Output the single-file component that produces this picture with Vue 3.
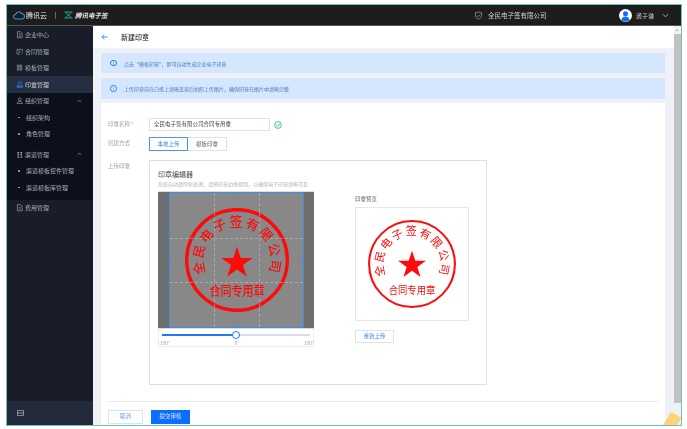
<script setup>
const topItems = [
  { label: '企业中心', icon: 'M2 1h5l2 2v7H2zM4 4h3M4 6h3M4 8h3' },
  { label: '合同管理', icon: 'M1.5 2h8v3M1.5 2v7h4M3.5 4.5h3M3.5 6.5h2M7 9l2.5-2.5' },
  { label: '模板管理', icon: 'M2 1.5h2.5v3H2zM6 1.5h2.5v2H6zM2 6h2.5v3H2zM6 5h2.5v4H6z' }
]
const handles = ['tl', 'tm', 'tr', 'ml', 'mr', 'bl', 'bm', 'br']
</script>

<template>
  <div class="frame">
    <header class="topbar">
      <div class="brand">
        <svg class="cloud" viewBox="0 0 14 10" width="12" height="9"><path d="M3.4 9a2.6 2.6 0 0 1-.3-5.2A3.9 3.9 0 0 1 10.3 3 3 3 0 0 1 10.5 9z" fill="none" stroke="#2f9cf0" stroke-width="1.2"/></svg>
        <span class="brand-cloud">腾讯云</span>
        <i class="brand-sep"></i>
        <svg viewBox="0 0 10 8" width="9" height="8"><path d="M.5.7h9M.5 7.3h9M2 .7c0 2 6 4.6 6 6.600M8 .7c0 2-6 4.6-6 6.600" fill="none" stroke="#14b8a6" stroke-width="1"/></svg>
        <span class="brand-sign">腾讯电子签</span>
      </div>
      <div class="account">
        <svg viewBox="0 0 10 10" width="9" height="9"><path d="M5 1l3.500 1v3c0 2-1.500 3.200-3.500 4C3 8.200 1.500 7 1.500 5V2zM3.500 5l1.200 1.200 2-2.200" fill="none" stroke="#a5a5a5" stroke-width=".8"/></svg>
        <span class="company">全民电子签有限公司</span>
      </div>
      <div class="user">
        <svg viewBox="0 0 13 13" width="13" height="13"><circle cx="6.500" cy="6.500" r="6.500" fill="#fff"/><circle cx="6.500" cy="4.800" r="2.500" fill="#0c6dff"/><path d="M2.300 11c.6-2.500 2.300-3.500 4.200-3.500s3.600 1 4.200 3.500a6.500 6.500 0 0 1-8.400 0z" fill="#0c6dff"/></svg>
        <span class="user-name">龚子谦</span>
        <svg viewBox="0 0 8 5" width="7" height="5"><path d="M1 1l3 3 3-3" fill="none" stroke="#c9c9c9" stroke-width=".9"/></svg>
      </div>
    </header>

    <div class="body">
      <aside class="sidebar">
        <nav class="nav-top">
          <a v-for="item in topItems" :key="item.label" class="row">
            <svg class="ico" viewBox="0 0 11 11"><path :d="item.icon" fill="none" stroke="currentColor" stroke-width=".9"/></svg>{{ item.label }}
          </a>
          <a class="row active">
            <svg class="ico" viewBox="0 0 11 11"><path d="M5.500 1a2.300 2.300 0 0 1 1.300 4.200L7 7h2.500v1.500h-8V7H4l.2-1.800A2.300 2.300 0 0 1 5.500 1zM1.500 10h8" fill="none" stroke="#2f8cff" stroke-width="1"/></svg>印章管理
          </a>
        </nav>
        <nav class="nav-sub">
          <a class="row">
            <svg class="ico" viewBox="0 0 11 11"><circle cx="5.500" cy="3.500" r="2.200" fill="none" stroke="currentColor" stroke-width=".9"/><path d="M1.500 9.500c.4-2.500 2-3.300 4-3.300s3.600.8 4 3.300z" fill="none" stroke="currentColor" stroke-width=".9"/></svg>组织管理
            <svg class="caret" viewBox="0 0 6 4"><path d="M1 3l2-2 2 2" fill="none" stroke="currentColor" stroke-width=".8"/></svg>
          </a>
          <a class="row sub"><i class="dot"></i>组织架构</a>
          <a class="row sub"><i class="dot"></i>角色管理</a>
          <a class="row gap">
            <svg class="ico" viewBox="0 0 11 11"><path d="M2 1.500h2.500v2H2zM6.500 1.500H9v2H6.500zM2 4.700h2.500v2H2zM6.500 4.700H9v2H6.500zM2 8h2.500v2H2zM6.500 8H9v2H6.500z" fill="currentColor"/></svg>渠道管理
            <svg class="caret" viewBox="0 0 6 4"><path d="M1 3l2-2 2 2" fill="none" stroke="currentColor" stroke-width=".8"/></svg>
          </a>
          <a class="row sub"><i class="dot"></i>渠道模板控件管理</a>
          <a class="row sub"><i class="dot"></i>渠道模板库管理</a>
        </nav>
        <nav class="nav-rest">
          <a class="row">
            <svg class="ico" viewBox="0 0 11 11"><path d="M2 1h5l2 2v7H2zM4 5h3M4 7.500h3" fill="none" stroke="currentColor" stroke-width=".9"/></svg>费用管理
          </a>
        </nav>
        <div class="side-foot">
          <svg viewBox="0 0 8 7" width="7" height="6"><path d="M.5 .5h7v6h-7zM.5 3.500h7" fill="none" stroke="#9aa1ad" stroke-width="1"/></svg>
        </div>
      </aside>

      <main class="main">
        <div class="content">
          <div class="title-bar">
            <svg viewBox="0 0 8 7" width="7" height="6"><path d="M3.500 .8L.9 3.500l2.600 2.700M1 3.500h6.500" fill="none" stroke="#1c7cf5" stroke-width="1"/></svg>
            <h1>新建印章</h1>
          </div>
          <div class="page">
            <div class="notice n1"><i class="info">i</i>点击“模板印章”，即可自动生成企业电子印章</div>
            <div class="notice n2"><i class="info">i</i>上传印章前在白纸上清晰盖章后拍照上传图片，确保印章在图片中清晰完整</div>
            <section class="card">
              <div class="field f-name">
                <label class="lbl">印章名称<b>*</b></label>
                <div class="input">全民电子签有限公司合同专用章</div>
                <svg class="ok" viewBox="0 0 10 10" width="8" height="8"><circle cx="5" cy="5" r="4.200" fill="none" stroke="#10b96a" stroke-width="1"/><path d="M3 5l1.600 1.600L7.400 3.500" fill="none" stroke="#10b96a" stroke-width="1"/></svg>
              </div>
              <div class="field f-way">
                <label class="lbl">创建方式</label>
                <div class="seg">
                  <span class="seg-on">本地上传</span>
                  <span class="seg-off">模板印章</span>
                </div>
              </div>
              <div class="field f-upload">
                <label class="lbl">上传印章</label>
                <div class="upload">
                  <div class="editor">
                    <h2>印章编辑器</h2>
                    <p>系统自动透明化处理，请将印章边缘裁切，以确保电子印章清晰可见</p>
                    <div class="canvas">
                      <div class="crop">
                        <svg width="120" height="120" viewBox="-60 -60 120 120" class="stamp">
                          <circle r="50.300" fill="none" stroke="#ff0a0a" stroke-width="3.400"/>
                          <path id="arc-edit" d="M-27.900 19.500A34 34 0 1 1 27.900 19.500" fill="none"/>
                          <text class="seal-txt" font-weight="500" font-size="13" letter-spacing="1.900" text-anchor="middle"><textPath href="#arc-edit" startOffset="50%">全民电子签有限公司</textPath></text>
                          <polygon points="0,-13.500 3.700,-2.100 15.700,-2.100 6,5 9.700,16.400 0,9.400 -9.700,16.400 -6,5 -15.700,-2.100 -3.700,-2.100" fill="#ff0a0a"/>
                          <text class="seal-txt" font-weight="500" font-size="11" text-anchor="middle" transform="translate(0 35) scale(1 1.150)">合同专用章</text>
                        </svg>
                        <i class="gl v1"></i><i class="gl v2"></i><i class="gl h1"></i><i class="gl h2"></i>
                        <i v-for="h in handles" :key="h" class="hd" :class="h"></i>
                      </div>
                    </div>
                    <div class="slider">
                      <div class="track"><i class="fill"></i><i class="knob"></i></div>
                      <div class="ticks"><span>-180°</span><span>0°</span><span>180°</span></div>
                    </div>
                  </div>
                  <div class="preview">
                    <h3>印章预览</h3>
                    <div class="pv-box">
                      <svg width="102" height="102" viewBox="-60 -60 120 120" class="stamp">
                        <circle r="50.500" fill="none" stroke="#ff0a0a" stroke-width="2.400"/>
                        <path id="arc-view" d="M-27.900 19.500A34 34 0 1 1 27.900 19.500" fill="none"/>
                        <text class="seal-txt" font-weight="400" font-size="13" letter-spacing="1.900" text-anchor="middle"><textPath href="#arc-view" startOffset="50%">全民电子签有限公司</textPath></text>
                        <polygon points="0,-15.500 3.900,-3.900 16.300,-3.900 6.300,3.500 10.100,15.300 0,8 -10.100,15.300 -6.300,3.500 -16.300,-3.900 -3.900,-3.900" fill="#ff0a0a"/>
                        <text class="seal-txt" font-weight="400" font-size="11" text-anchor="middle" transform="translate(0 35) scale(1 1.150)">合同专用章</text>
                      </svg>
                    </div>
                    <button class="btn reup">重新上传</button>
                  </div>
                </div>
              </div>
              <div class="footer">
                <button class="btn cancel">取消</button>
                <button class="btn submit">提交审核</button>
              </div>
            </section>
          </div>
        </div>
        <div class="scrollbar"><i class="sb-arrow"></i><i class="sb-thumb"></i></div>
      </main>
    </div>
    <i class="sticker"></i>
  </div>
</template>

<style>
html, body { margin: 0; background: #fff; overflow: hidden; }
</style>

<style scoped>
* { box-sizing: border-box; }
.frame {
  position: relative;
  width: 676px;
  height: 422px;
  margin: 4px 0 0 6px;
  border: 1px solid #6cc4b8;
  display: flex;
  flex-direction: column;
  overflow: hidden;
  font-family: "Noto Sans CJK SC", "Noto Sans", sans-serif;
  font-size: 5px;
  filter: blur(.4px);
}
.topbar {
  flex: 0 0 21px;
  height: 21px;
  background: #1d1d1d;
  display: flex;
  align-items: center;
  border-bottom: 1px solid #555;
  color: #ddd;
}
.brand { display: flex; align-items: center; padding-left: 6px; flex: 0 0 467px; }
.brand-cloud { font-size: 7px; margin-left: 1px; color: #e8e8e8; }
.brand-sep { width: 1px; height: 7px; background: #666; margin: 0 8px; }
.brand-sign { font-size: 6.500px; font-style: italic; font-weight: 700; margin-left: 2px; color: #e8e8e8; }
.account { display: flex; align-items: center; gap: 5px; flex: 0 0 145px; }
.company { font-size: 6.500px; color: #cfcfcf; }
.user { display: flex; align-items: center; }
.user-name { font-size: 6px; margin: 0 8px 0 4px; color: #ccc; }

.body { flex: 1; display: flex; min-height: 0; }
.sidebar {
  flex: 0 0 86px;
  display: flex;
  flex-direction: column;
  background: #181d29;
  color: #a5abb6;
  font-size: 6px;
}
.row { display: flex; align-items: center; height: 16.500px; padding-left: 9px; white-space: nowrap; }
.ico { width: 7.500px; height: 7.500px; margin-right: 1.500px; flex: none; }
.active { background: #262f41; color: #c7cdd8; }
.sub { padding-left: 11px; }
.dot { width: 1.500px; height: 1.500px; background: #a5abb6; border-radius: 50%; margin-right: 6.500px; flex: none; }
.caret { width: 5px; height: 4px; margin-left: 28px; }
.gap { margin-top: 4px; }
.nav-top { padding-top: .500px; }
.nav-sub { background: #0c101b; padding-bottom: 4px; }
.nav-rest { flex: 1; }
.side-foot { flex: 0 0 24px; background: #232b3b; display: flex; align-items: center; padding-left: 9.500px; }

.main { flex: 1; display: flex; min-width: 0; background: #f0f1f7; }
.content { flex: 1; min-width: 0; display: flex; flex-direction: column; }
.title-bar { flex: 0 0 22px; background: #fff; display: flex; align-items: center; padding-left: 8px; }
h1 { margin: 0 0 0 13px; font-size: 7px; font-weight: 500; color: #333; }
.page { flex: 1; padding: 5px 9px 0 8px; display: flex; flex-direction: column; min-height: 0; }
.notice { background: #d5e7ff; color: #4f79b0; display: flex; align-items: center; padding-left: 9px; white-space: nowrap; }
.n1 { height: 20px; margin-bottom: 5px; }
.n2 { height: 21px; margin-bottom: 4px; }
.info {
  width: 6.500px; height: 6.500px; border: 1px solid #2f7fe8; border-radius: 50%; margin-right: 7.500px;
  color: #2f7fe8; font-size: 4px; font-style: normal; line-height: 4.500px; text-align: center; flex: none;
}
.card { flex: 1; background: #fff; padding: 15px 6px 0 7px; min-height: 0; }
.field { display: flex; }
.lbl { flex: 0 0 41px; color: #a3a3a3; font-size: 5.500px; line-height: 13px; white-space: nowrap; }
.lbl b { color: #f0526a; font-weight: 400; margin-left: 1px; }
.f-name { height: 13px; margin-bottom: 6px; align-items: center; }
.input {
  width: 121px; height: 13px; border: 1px solid #dde3ee; padding-left: 4px; font-size: 5.500px; line-height: 11px; color: #444; white-space: nowrap;
}
.ok { margin-left: 4px; }
.f-way { height: 14px; margin-bottom: 9px; }
.seg { display: flex; font-size: 5.500px; line-height: 12px; text-align: center; }
.seg-on { width: 39px; height: 14px; border: 1px solid #4d95f5; color: #2d7ff0; }
.seg-off { width: 39px; height: 14px; border: 1px solid #dde3ee; border-left: 0; color: #666; }
.f-upload { height: 225px; }
.upload { flex: 0 0 338px; border: 1px solid #dcdfe6; padding: 8px 8px 0; display: flex; }
.editor { flex: 0 0 156px; }
h2 { margin: 0; font-size: 7px; font-weight: 400; line-height: 10px; color: #444; }
.editor p { margin: 0 0 3px; font-size: 5px; line-height: 9px; color: #b3b3b3; white-space: nowrap; }
.canvas { height: 137px; background: #6f6f6f; border-top: 1px solid #ddd; padding: 0 10px 0 11px; }
.crop {
  position: relative; height: 136px; background: #888; border: 1px solid #3c8ee8;
  display: flex; align-items: center; justify-content: center;
}
.stamp { display: block; }
.seal-txt { fill: #ff0a0a; font-family: "Noto Sans CJK SC", sans-serif; }
.gl { position: absolute; z-index: 1; opacity: .55; }
.v1, .v2 { top: 0; bottom: 0; border-left: 1px dashed #c4c4c4; }
.h1, .h2 { left: 0; right: 0; border-top: 1px dashed #c4c4c4; }
.v1 { left: 33.300%; } .v2 { left: 66.600%; } .h1 { top: 33.300%; } .h2 { top: 66.600%; }
.hd { position: absolute; width: 2px; height: 2px; background: #3c8ee8; z-index: 2; }
.tl { left: -1px; top: -1px; } .tm { left: 50%; top: -1px; } .tr { right: -1px; top: -1px; }
.ml { left: -1px; top: 50%; } .mr { right: -1px; top: 50%; }
.bl { left: -1px; bottom: -1px; } .bm { left: 50%; bottom: -1px; } .br { right: -1px; bottom: -1px; }
.slider { height: 19px; border: 1px solid #eee; border-top: 1px solid #dcdcdc; padding: 5px 3px 0; }
.track { position: relative; height: 2px; background: #d8dde8; }
.fill { position: absolute; left: 0; top: 0; bottom: 0; width: 50%; background: #1c7cf5; }
.knob { position: absolute; left: 50%; top: -3px; width: 8px; height: 8px; margin-left: -4px; border-radius: 50%; background: #fff; border: 1.200px solid #1c7cf5; }
.ticks { display: flex; justify-content: space-between; margin: 4px -4px 0; color: #a8a8a8; font-size: 5px; line-height: 6px; }
.preview { margin: 26px 0 0 41px; flex: 0 0 114px; }
h3 { margin: 0 0 4px; font-size: 5.500px; font-weight: 400; line-height: 8px; color: #666; }
.pv-box { width: 114px; height: 114px; border: 1px solid #e6e6e6; display: flex; align-items: center; justify-content: center; }
.btn { display: block; font-family: inherit; font-size: 5.500px; padding: 0; line-height: 1; }
.reup { margin-top: 9px; width: 39px; height: 13px; background: #fff; border: 1px solid #dde3ee; color: #2d7ff0; }
.footer { margin: 16px 0 0; padding-top: 8px; border-top: 1px solid #e9e9ee; display: flex; gap: 8px; }
.cancel { width: 35px; height: 14px; background: #fff; border: 1px solid #dde3ee; color: #5c9af0; }
.submit { width: 39px; height: 14px; background: #0c6dff; border: 0; color: #dfeaff; }

.scrollbar { flex: 0 0 7px; background: #f1f1f4; display: flex; flex-direction: column; align-items: stretch; }
.sb-arrow { flex: 0 0 8px; position: relative; }
.sb-arrow::before {
  content: ""; position: absolute; left: 2px; top: 3px;
  border: 1.500px solid transparent; border-top: 0; border-bottom: 2px solid #9a9a9a;
}
.sb-thumb { height: 369px; background: #c1c1c1; }
.sticker {
  position: absolute; left: 656.600px; top: 408.200px; width: 12px; height: 24px;
  background: #ffd27a; transform: rotate(32deg); z-index: 3;
}
</style>
